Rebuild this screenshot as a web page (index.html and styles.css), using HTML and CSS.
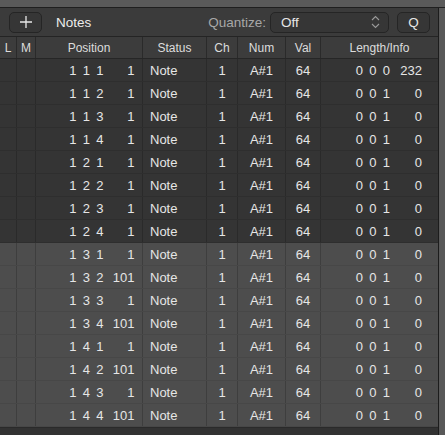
FILE: index.html
```html
<!DOCTYPE html>
<html>
<head>
    <meta charset="utf-8">
    <link rel="stylesheet" href="styles.css">
</head>
<body>
    <div class="topStrip"></div>
    <div class="editor">
        <div class="mainPane">
            <!-- toolbar -->
            <div class="toolbar">
                <div class="btn plusBtn">
                    <svg width="14" height="14" viewBox="0 0 14 14"><path d="M7 1v12M1 7h12" stroke="#e8e8e8" stroke-width="1.3"/></svg>
                </div>
                <div class="title">Notes</div>
                <div class="spacer"></div>
                <div class="qLabel">Quantize:</div>
                <div class="select">
                    <span>Off</span>
                    <svg width="9" height="14" viewBox="0 0 9 14"><path d="M1 5l3.5-3.5L8 5M1 9l3.5 3.5L8 9" fill="none" stroke="#9a9a9a" stroke-width="1.1"/></svg>
                </div>
                <div class="btn qBtn">Q</div>
            </div>

            <!-- column headers -->
            <div class="row head">
                <div class="cell">L</div>
                <div class="cell">M</div>
                <div class="cell">Position</div>
                <div class="cell">Status</div>
                <div class="cell">Ch</div>
                <div class="cell">Num</div>
                <div class="cell">Val</div>
                <div class="cell">Length/Info</div>
            </div>

            <div id="list"></div>
            <div class="bottomStrip"></div>
        </div>
        <div class="scrollEdge"></div>
    </div>

    <script>
        var events = [
            ['1','1','1','1','0','0','0','232'],
            ['1','1','2','1'], ['1','1','3','1'], ['1','1','4','1'],
            ['1','2','1','1'], ['1','2','2','1'], ['1','2','3','1'], ['1','2','4','1'],
            ['1','3','1','1'], ['1','3','2','101'], ['1','3','3','1'], ['1','3','4','101'],
            ['1','4','1','1'], ['1','4','2','101'], ['1','4','3','1'], ['1','4','4','101']
        ]

        var list = document.getElementById('list')
        events.forEach(function (ev, i) {
            var len = ev.length > 4 ? ev.slice(4) : ['0','0','1','0']
            var row = document.createElement('div')
            row.className = 'row' + (i >= 8 ? ' sel' : '')
            row.innerHTML =
                '<div class="cell"></div><div class="cell"></div>' +
                '<div class="cell pos"><span>' + ev[0] + '</span><span>' + ev[1] + '</span><span>' + ev[2] + '</span><span class="tick">' + ev[3] + '</span></div>' +
                '<div class="cell status">Note</div>' +
                '<div class="cell">1</div>' +
                '<div class="cell">A#1</div>' +
                '<div class="cell">64</div>' +
                '<div class="cell len"><span>' + len[0] + '</span><span>' + len[1] + '</span><span>' + len[2] + '</span><span class="tick">' + len[3] + '</span></div>'
            list.appendChild(row)
        })
    </script>
</body>
</html>
```

FILE: styles.css
```css
body {
    margin: 0;
    width: 445px;
    height: 435px;
    overflow: hidden;
    background-color: #333333;
    font-family: "Liberation Sans", Arial, sans-serif;
    font-size: 13px;
    color: #e6e6e6;
}

.topStrip {
    height: 7px;
    background-color: #5a5a5a;
    border-bottom: 1px solid #1f1f1f;
}

.editor {
    display: flex;
    height: 427px;
}

.mainPane {
    width: 438px;
    display: flex;
    flex-direction: column;
}

.scrollEdge {
    width: 6px;
    border-left: 1px solid #1c1c1c;
    background-color: #585858;
}

.toolbar {
    height: 29px;
    display: flex;
    align-items: center;
    padding-left: 9px;
    padding-right: 8px;
    background-color: #3b3b3b;
    border-bottom: 1px solid #242424;
    box-sizing: border-box;
}

.btn {
    height: 21px;
    display: flex;
    align-items: center;
    justify-content: center;
    box-sizing: border-box;
    border: 1px solid #252525;
    border-radius: 5px;
    background-color: #363636;
}

.plusBtn {
    width: 33px;
}

.title {
    margin-left: 14px;
    font-size: 13.5px;
    color: #ececec;
}

.spacer {
    flex: 1 1 auto;
}

.qLabel {
    color: #a8a8a8;
    font-size: 13.5px;
    margin-right: 4px;
}

.select {
    width: 119px;
    height: 21px;
    display: flex;
    align-items: center;
    justify-content: space-between;
    padding: 0 8px 0 10px;
    box-sizing: border-box;
    border: 1px solid #252525;
    border-radius: 5px;
    background-color: #363636;
    font-size: 13.5px;
}

.qBtn {
    width: 33px;
    margin-left: 8px;
    font-size: 13.5px;
}

.row {
    display: grid;
    grid-template-columns: 17px 19px 107px 64px 31px 48px 35px 1fr;
    height: 23px;
    background-color: #343434;
    border-bottom: 1px solid #2e2e2e;
    box-sizing: border-box;
}

.row.sel {
    background-color: #4d4d4d;
    border-bottom-color: #474747;
}

.row.head {
    height: 22px;
    background-color: #3c3c3c;
    border-bottom: 1px solid #262626;
    font-size: 12px;
    color: #dcdcdc;
}

.cell {
    display: flex;
    align-items: center;
    justify-content: center;
    border-right: 1px solid #2a2a2a;
    white-space: nowrap;
}

.row.sel .cell {
    border-right-color: #3e3e3e;
}

.head .cell {
    border-right-color: #2a2a2a;
}

.cell:last-child {
    border-right: none;
}

.pos,
.len {
    justify-content: flex-start;
}

.pos span,
.len span {
    display: inline-block;
    width: 13.5px;
    text-align: right;
}

.pos {
    padding-left: 27px;
}

.pos .tick {
    width: 31px;
}

.len {
    padding-left: 28.5px;
}

.len .tick {
    width: 32px;
}

.status {
    justify-content: flex-start;
    padding-left: 7px;
}

.bottomStrip {
    flex: 1 1 auto;
    background-color: #323232;
    border-top: 1px solid #2a2a2a;
}
```
